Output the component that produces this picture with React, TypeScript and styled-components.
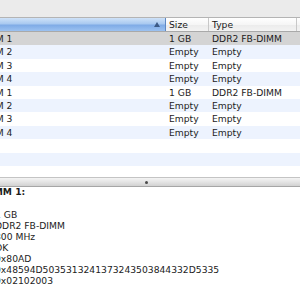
import styled, { createGlobalStyle } from "styled-components";

const GlobalStyle = createGlobalStyle`
  html, body {
    margin: 0;
    padding: 0;
    background: #ffffff;
    overflow: hidden;
  }
  body {
    font-family: "DejaVu Sans", "Liberation Sans", sans-serif;
    font-size: 9.2px;
    color: #1c1c1c;
  }
`;

const slots = [
  { name: "DIMM Riser A/DIMM 1", size: "1 GB", type: "DDR2 FB-DIMM" },
  { name: "DIMM Riser A/DIMM 2", size: "Empty", type: "Empty" },
  { name: "DIMM Riser A/DIMM 3", size: "Empty", type: "Empty" },
  { name: "DIMM Riser A/DIMM 4", size: "Empty", type: "Empty" },
  { name: "DIMM Riser B/DIMM 1", size: "1 GB", type: "DDR2 FB-DIMM" },
  { name: "DIMM Riser B/DIMM 2", size: "Empty", type: "Empty" },
  { name: "DIMM Riser B/DIMM 3", size: "Empty", type: "Empty" },
  { name: "DIMM Riser B/DIMM 4", size: "Empty", type: "Empty" },
  { name: "", size: "", type: "" },
  { name: "", size: "", type: "" },
  { name: "", size: "", type: "" },
];

const details = [
  ["Size:", "1 GB"],
  ["Type:", "DDR2 FB-DIMM"],
  ["Speed:", "800 MHz"],
  ["Status:", "OK"],
  ["Manufacturer:", "0x80AD"],
  ["Part Number:", "0x48594D5035313241373243503844332D5335"],
  ["Serial Number:", "0x02102003"],
];

function App() {
  return (
    <>
      <GlobalStyle />
      <Window>
        <TopStrip />
        <TablePane>
          <Scroller>
            <HeaderRow>
              <HeaderCell $sorted>
                Memory Slot
                <SortArrow />
              </HeaderCell>
              <HeaderCell>Size</HeaderCell>
              <HeaderCell>Type</HeaderCell>
              <HeaderCell />
            </HeaderRow>
            {slots.map((s, i) => (
              <Row key={i} $selected={i === 0} $odd={i % 2 === 1}>
                <Cell>{s.name}</Cell>
                <Cell>{s.size}</Cell>
                <Cell>{s.type}</Cell>
                <Cell />
              </Row>
            ))}
          </Scroller>
        </TablePane>
        <Splitter>
          <Dimple />
        </Splitter>
        <DetailPane>
          <DetailTitle>DIMM Riser A/DIMM 1:</DetailTitle>
          {details.map(([k, v]) => (
            <DetailLine key={k}>
              <DetailKey>{k}</DetailKey>
              <span>{v}</span>
            </DetailLine>
          ))}
        </DetailPane>
      </Window>
    </>
  );
}

const Window = styled.div`
  width: 300px;
  height: 300px;
  display: flex;
  flex-direction: column;
  overflow: hidden;
`;

const TopStrip = styled.div`
  height: 17px;
  flex: none;
  background: #ebebeb;
  border-bottom: 1px solid #b4b4b4;
`;

const TablePane = styled.div`
  height: 159px;
  flex: none;
  overflow: hidden;
  background: #ffffff;
`;

const Scroller = styled.div`
  margin-left: -89px;
  width: 440px;
`;

const cols = "255px 43px 88px 54px";

const HeaderRow = styled.div`
  display: grid;
  grid-template-columns: ${cols};
  height: 13px;
  border-bottom: 1px solid #a9a9a9;
`;

const HeaderCell = styled.div<{ $sorted?: boolean }>`
  position: relative;
  display: flex;
  align-items: center;
  padding-left: 3px;
  border-right: 1px solid ${(p) => (p.$sorted ? "#5d88c4" : "#c8c8c8")};
  color: #1a1a1a;
  white-space: nowrap;
  overflow: hidden;
  background: ${(p) =>
    p.$sorted
      ? "linear-gradient(to bottom, #cfe2f8 0%, #a9c9f0 45%, #7fabe6 55%, #9cc2f1 100%)"
      : "linear-gradient(to bottom, #ffffff 0%, #f6f6f6 50%, #ececec 55%, #f3f3f3 100%)"};
`;

const SortArrow = styled.span`
  position: absolute;
  right: 5px;
  top: 4px;
  width: 0;
  height: 0;
  border-left: 3px solid transparent;
  border-right: 3px solid transparent;
  border-bottom: 5px solid #3c5a86;
`;

const Row = styled.div<{ $selected?: boolean; $odd?: boolean }>`
  display: grid;
  grid-template-columns: ${cols};
  height: 13.4px;
  align-items: center;
  background: ${(p) => (p.$selected ? "#d4d4d4" : p.$odd ? "#edf3fe" : "#ffffff")};
`;

const Cell = styled.div`
  padding-left: 3px;
  white-space: nowrap;
  overflow: hidden;
  line-height: 13.4px;
`;

const Splitter = styled.div`
  flex: none;
  height: 8px;
  display: flex;
  align-items: center;
  justify-content: center;
  background: linear-gradient(to bottom, #f4f4f4 0%, #e4e4e4 50%, #d2d2d2 100%);
  border-top: 1px solid #c4c4c4;
  border-bottom: 1px solid #a6a6a6;
  padding-right: 8px;
`;

const Dimple = styled.span`
  width: 3px;
  height: 3px;
  border-radius: 50%;
  background: #4a4a4a;
`;

const DetailPane = styled.div`
  flex: 1;
  background: #ffffff;
  margin-left: -75px;
  line-height: 10.95px;
  white-space: nowrap;
`;

const DetailTitle = styled.div`
  font-weight: bold;
  margin-left: -15px;
  margin-bottom: 12.4px;
`;

const DetailLine = styled.div`
  display: grid;
  grid-template-columns: 70px auto;
`;

const DetailKey = styled.span`
  text-align: right;
  padding-right: 6px;
  overflow: hidden;
`;

export default App;
